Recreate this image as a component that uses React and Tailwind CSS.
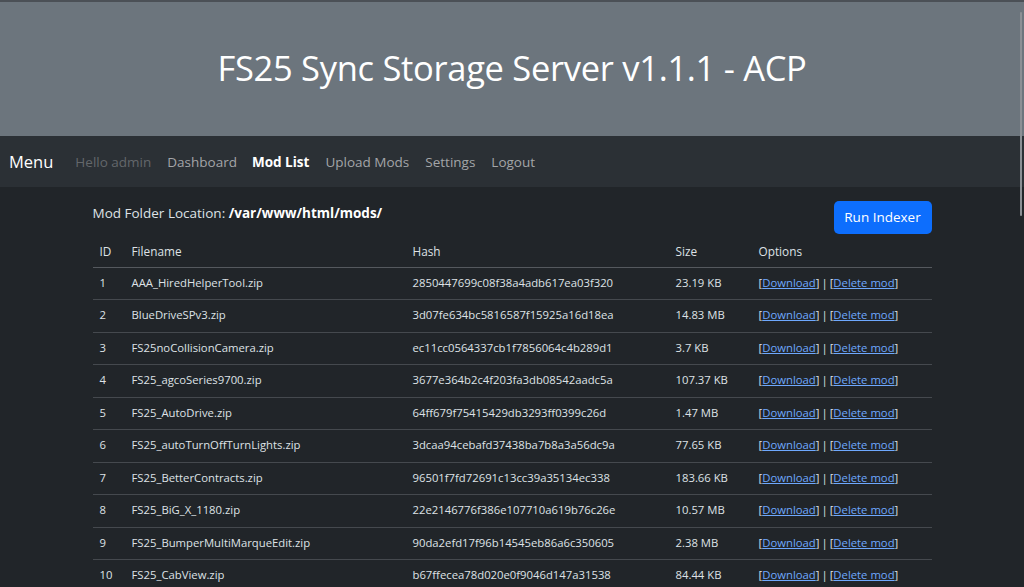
import React from "react";

const rows = [
  ["1", "AAA_HiredHelperTool.zip", "2850447699c08f38a4adb617ea03f320", "23.19 KB"],
  ["2", "BlueDriveSPv3.zip", "3d07fe634bc5816587f15925a16d18ea", "14.83 MB"],
  ["3", "FS25noCollisionCamera.zip", "ec11cc0564337cb1f7856064c4b289d1", "3.7 KB"],
  ["4", "FS25_agcoSeries9700.zip", "3677e364b2c4f203fa3db08542aadc5a", "107.37 KB"],
  ["5", "FS25_AutoDrive.zip", "64ff679f75415429db3293ff0399c26d", "1.47 MB"],
  ["6", "FS25_autoTurnOffTurnLights.zip", "3dcaa94cebafd37438ba7b8a3a56dc9a", "77.65 KB"],
  ["7", "FS25_BetterContracts.zip", "96501f7fd72691c13cc39a35134ec338", "183.66 KB"],
  ["8", "FS25_BiG_X_1180.zip", "22e2146776f386e107710a619b76c26e", "10.57 MB"],
  ["9", "FS25_BumperMultiMarqueEdit.zip", "90da2efd17f96b14545eb86a6c350605", "2.38 MB"],
  ["10", "FS25_CabView.zip", "b67ffecea78d020e0f9046d147a31538", "84.44 KB"],
];

export default function App() {
  return (
    <div
      className="relative h-[587px] w-[1024px] overflow-hidden bg-[#212529] text-[#dee2e6]"
      style={{ fontFamily: '"Open Sans", "Noto Sans", sans-serif' }}
    >
      <div className="h-[2px] bg-[#4b5056]" />
      <header className="flex h-[134px] items-center justify-center bg-[#6c757d] pb-[2px]">
        <h1 className="text-[34.5px] font-normal tracking-[-0.3px] text-white">FS25 Sync Storage Server v1.1.1 - ACP</h1>
      </header>
      <nav className="flex h-[51px] items-center bg-[#2b3035] pl-[9px] pt-[2px] text-[13.5px]">
        <span className="mr-[22px] text-[16.5px] text-white">Menu</span>
        <span className="mr-[16px] text-[#63676b]">Hello admin</span>
        <span className="mr-[15px] text-[#a3a5a8]">Dashboard</span>
        <span className="mr-[16px] font-bold text-white">Mod List</span>
        <span className="mr-[16px] text-[#a3a5a8]">Upload Mods</span>
        <span className="mr-[16px] text-[#a3a5a8]">Settings</span>
        <span className="text-[#a3a5a8]">Logout</span>
      </nav>
      <main className="mx-auto w-[839px] pt-[14px]">
        <div className="flex items-start justify-between">
          <p className="mt-[2px] text-[13.5px]">
            Mod Folder Location: <b className="font-bold text-white">/var/www/html/mods/</b>
          </p>
          <button className="h-[33px] w-[98px] rounded-[5px] bg-[#0d6efd] text-[13.5px] text-white">Run Indexer</button>
        </div>
        <table className="mt-[2px] w-full table-fixed border-collapse text-[11.3px]">
          <colgroup>
            <col className="w-[32px]" />
            <col className="w-[281px]" />
            <col className="w-[263px]" />
            <col className="w-[83px]" />
            <col />
          </colgroup>
          <thead>
            <tr className="h-[31px] border-b border-[#55595e] text-[11.8px]">
              <th className="pl-[7px] pt-[1px] text-left font-normal">ID</th>
              <th className="pl-[7px] pt-[1px] text-left font-normal">Filename</th>
              <th className="pl-[7px] pt-[1px] text-left font-normal">Hash</th>
              <th className="pl-[7px] pt-[1px] text-left font-normal">Size</th>
              <th className="pl-[7px] pt-[1px] text-left font-normal">Options</th>
            </tr>
          </thead>
          <tbody>
            {rows.map((r) => (
              <tr key={r[0]} className="h-[32.5px] border-b border-[#45494e]">
                <td className="pl-[7px]">{r[0]}</td>
                <td className="pl-[7px] whitespace-nowrap">{r[1]}</td>
                <td className="pl-[7px] whitespace-nowrap">{r[2]}</td>
                <td className="pl-[7px] whitespace-nowrap">{r[3]}</td>
                <td className="pl-[7px] whitespace-nowrap">
                  [<span className="text-[#6ea8fe] underline">Download</span>]
                  <span className="mx-[2px]">|</span>[
                  <span className="text-[#6ea8fe] underline">Delete mod</span>]
                </td>
              </tr>
            ))}
          </tbody>
        </table>
      </main>
      <div className="absolute right-[2px] top-[12px] h-[204px] w-[2px] rounded-full bg-[#8c9095]" />
    </div>
  );
}
